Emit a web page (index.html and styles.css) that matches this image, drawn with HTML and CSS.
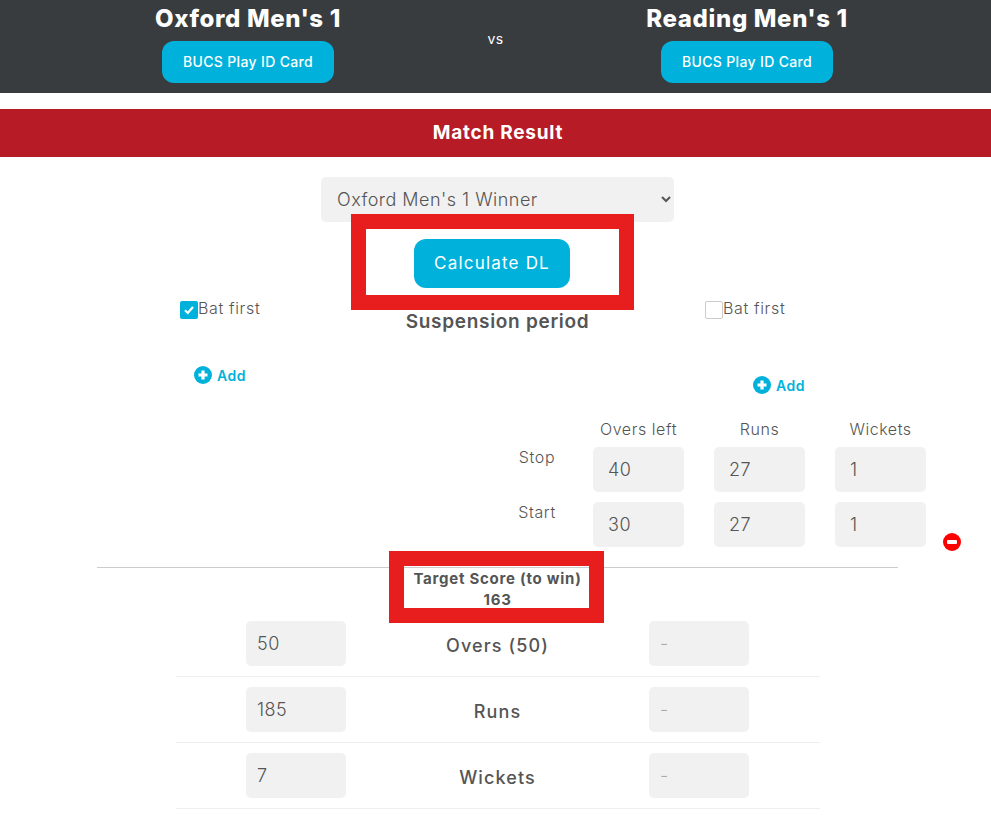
FILE: index.html
```html
<!DOCTYPE html>
<html lang="en">
<head>
    <meta charset="UTF-8">
    <meta name="viewport" content="width=device-width, initial-scale=1.0">
    <title>Match Result</title>
    <link rel="stylesheet" href="styles.css">
</head>
<body>
    <div class="page">
        <header class="match-header">
            <div class="team">
                <h2>Oxford Men's 1</h2>
                <a class="btn btn-card" href="#">BUCS Play ID Card</a>
            </div>
            <div class="versus">vs</div>
            <div class="team">
                <h2>Reading Men's 1</h2>
                <a class="btn btn-card" href="#">BUCS Play ID Card</a>
            </div>
        </header>

        <h3 class="section-title">Match Result</h3>

        <div class="result-select">
            <select>
                <option>Oxford Men's 1 Winner</option>
                <option>Reading Men's 1 Winner</option>
            </select>
        </div>
        <div class="calculate">
            <button type="button" class="btn btn-calc">Calculate DL</button>
        </div>

        <div class="innings">
            <div class="innings-side">
                <label class="bat-first">
                    <span class="check check-on">
                        <svg viewBox="0 0 18 18" width="18" height="18"><path d="M5 9.2l2.8 2.8 5.2-6" fill="none" stroke="#fff" stroke-width="2.2"/></svg>
                    </span>Bat first
                </label>
                <a class="add add-left" href="#">
                    <svg viewBox="0 0 18 18" width="18" height="18"><circle cx="9" cy="9" r="9" fill="#00b2db"/><path d="M9 4.5v9M4.5 9h9" stroke="#fff" stroke-width="3.2"/></svg>
                    Add
                </a>
            </div>
            <h4 class="suspension-title">Suspension period</h4>
            <div class="innings-side innings-right">
                <label class="bat-first">
                    <span class="check"></span>Bat first
                </label>
                <a class="add add-right" href="#">
                    <svg viewBox="0 0 18 18" width="18" height="18"><circle cx="9" cy="9" r="9" fill="#00b2db"/><path d="M9 4.5v9M4.5 9h9" stroke="#fff" stroke-width="3.2"/></svg>
                    Add
                </a>
            </div>
        </div>

        <div class="suspension">
            <span></span>
            <span class="col-head">Overs left</span>
            <span class="col-head">Runs</span>
            <span class="col-head">Wickets</span>
            <span></span>

            <span class="row-head">Stop</span>
            <input class="field" type="text" value="40">
            <input class="field" type="text" value="27">
            <input class="field" type="text" value="1">
            <span></span>

            <span class="row-head">Start</span>
            <input class="field" type="text" value="30">
            <input class="field" type="text" value="27">
            <input class="field" type="text" value="1">
            <a class="remove" href="#">
                <svg viewBox="0 0 18 18" width="18" height="18"><circle cx="9" cy="9" r="9" fill="#f00"/><rect x="4" y="7" width="10" height="4" rx="1" fill="#fff"/></svg>
            </a>
        </div>

        <hr class="divider">

        <div class="target">Target Score (to win)<br>163</div>

        <div class="score-row">
            <input class="field field-score" type="text" value="50">
            <span class="score-label">Overs (50)</span>
            <input class="field field-score" type="text" placeholder="-">
        </div>
        <div class="score-row">
            <input class="field field-score" type="text" value="185">
            <span class="score-label">Runs</span>
            <input class="field field-score" type="text" placeholder="-">
        </div>
        <div class="score-row">
            <input class="field field-score" type="text" value="7">
            <span class="score-label">Wickets</span>
            <input class="field field-score" type="text" placeholder="-">
        </div>

        <!-- red boxes drawn on top of the screenshot -->
        <div class="mark mark-calc"></div>
        <div class="mark mark-target"></div>
    </div>
</body>
</html>
```

FILE: styles.css
```css
* {
    box-sizing: border-box;
}
body {
    margin: 0;
    padding: 0;
    background: #fff;
    color: #555;
    font-family: Inter, "Noto Sans", sans-serif;
    overflow: hidden;
}
a {
    text-decoration: none;
}
.page {
    position: relative;
    height: 828px;
}
.match-header {
    height: 93px;
    padding-left: 64px;
    background-color: #383c3f;
    color: #fff;
    display: grid;
    grid-template-columns: 368px 127px 376px;
}
.team {
    display: flex;
    flex-direction: column;
    align-items: center;
}
.team h2 {
    margin: 3px 0 0;
    height: 38px;
    line-height: 32px;
    font-size: 24px;
    font-weight: 800;
    letter-spacing: 0.65px;
}
.versus {
    padding-top: 29px;
    font-size: 14px;
    line-height: 20px;
    letter-spacing: 0.3px;
    text-align: center;
}
.btn {
    display: flex;
    align-items: center;
    justify-content: center;
    border: none;
    background-color: #00b2db;
    color: #fff;
    font-family: inherit;
}
.btn-card {
    width: 172px;
    height: 42px;
    padding-bottom: 2px;
    border-radius: 12px;
    font-size: 14px;
    font-weight: 500;
    letter-spacing: 0.35px;
}
.section-title {
    margin: 16px 0 0;
    padding-left: 5px;
    height: 48px;
    line-height: 47px;
    background-color: #b71c26;
    color: #fff;
    font-size: 19px;
    font-weight: 700;
    letter-spacing: 0.75px;
    text-align: center;
}
.result-select {
    margin-top: 20px;
    padding-left: 321px;
}
.result-select select {
    display: block;
    width: 353px;
    height: 45px;
    padding-left: 12px;
    border: none;
    border-radius: 5px;
    background-color: #f1f1f1;
    color: #555;
    font-family: inherit;
    font-size: 18px;
    font-weight: 300;
    letter-spacing: 0.48px;
}
.calculate {
    margin-top: 17px;
    padding-left: 414px;
}
.btn-calc {
    width: 156px;
    height: 49px;
    padding-bottom: 2px;
    border-radius: 12px;
    font-size: 17px;
    font-weight: 400;
    letter-spacing: 1.2px;
}
.innings {
    margin-top: 13px;
    height: 106px;
    display: grid;
    grid-template-columns: 395px 205px 1fr;
}
.innings-side {
    padding-left: 180px;
}
.innings-right {
    padding-left: 105px;
}
.bat-first {
    display: flex;
    align-items: flex-start;
    height: 18px;
    font-size: 16px;
    line-height: 15px;
    font-weight: 300;
    letter-spacing: 0.65px;
}
.check {
    width: 18px;
    height: 18px;
    border: 1px solid #ccc;
    border-radius: 2px;
    background: #fff;
}
.check-on {
    border: none;
    background-color: #00b2db;
}
.check svg {
    display: block;
}
.add {
    display: flex;
    align-items: center;
    gap: 5px;
    color: #00b2db;
    font-size: 14px;
    font-weight: 600;
    letter-spacing: 0.5px;
}
.add svg {
    flex: none;
}
.add-left {
    margin: 47px 0 0 14px;
}
.add-right {
    margin: 57px 0 0 48px;
}
.suspension-title {
    margin: 9px 0 0;
    font-size: 19px;
    line-height: 24px;
    font-weight: 600;
    letter-spacing: 0.7px;
    text-align: center;
    white-space: nowrap;
}
.suspension {
    margin-top: 11px;
    padding-left: 505px;
    display: grid;
    grid-template-columns: 88px 121px 121px 108px 18px;
    row-gap: 10px;
    align-items: start;
}
.col-head {
    width: 91px;
    margin-bottom: -3px;
    font-size: 16px;
    line-height: 22px;
    font-weight: 300;
    letter-spacing: 0.55px;
    text-align: center;
}
.row-head {
    width: 64px;
    margin-top: -1px;
    font-size: 16px;
    line-height: 22px;
    font-weight: 300;
    letter-spacing: 0.6px;
    text-align: center;
}
.field {
    display: block;
    width: 91px;
    height: 45px;
    padding: 0 0 0 15px;
    border: none;
    border-radius: 5px;
    background-color: #f1f1f1;
    color: #555;
    font-family: inherit;
    font-size: 18px;
    font-weight: 300;
    letter-spacing: 0.5px;
}
.field::placeholder {
    color: #aaa;
}
.field-score {
    width: 100px;
    padding-left: 11px;
}
.remove {
    align-self: end;
    margin-bottom: -4px;
}
.remove svg {
    display: block;
}
.divider {
    margin: 20px 93px 0 97px;
    border: none;
    border-top: 1px solid #ccc;
}
.target {
    height: 43px;
    padding-left: 4px;
    font-size: 15px;
    line-height: 21px;
    font-weight: 700;
    letter-spacing: 0.75px;
    text-align: center;
}
.score-row {
    width: 644px;
    margin-left: 176px;
    padding: 10px 71px 10px 70px;
    border-bottom: 1px solid #eee;
    display: grid;
    grid-template-columns: 100px 1fr 100px;
    align-items: center;
}
.score-label {
    padding-top: 4px;
    font-size: 18px;
    font-weight: 500;
    letter-spacing: 1.1px;
    text-align: center;
}
.mark {
    position: absolute;
    border: 15px solid #e81e1e;
}
.mark-calc {
    left: 351px;
    top: 214px;
    width: 283px;
    height: 96px;
}
.mark-target {
    left: 389px;
    top: 551px;
    width: 215px;
    height: 72px;
}
```
